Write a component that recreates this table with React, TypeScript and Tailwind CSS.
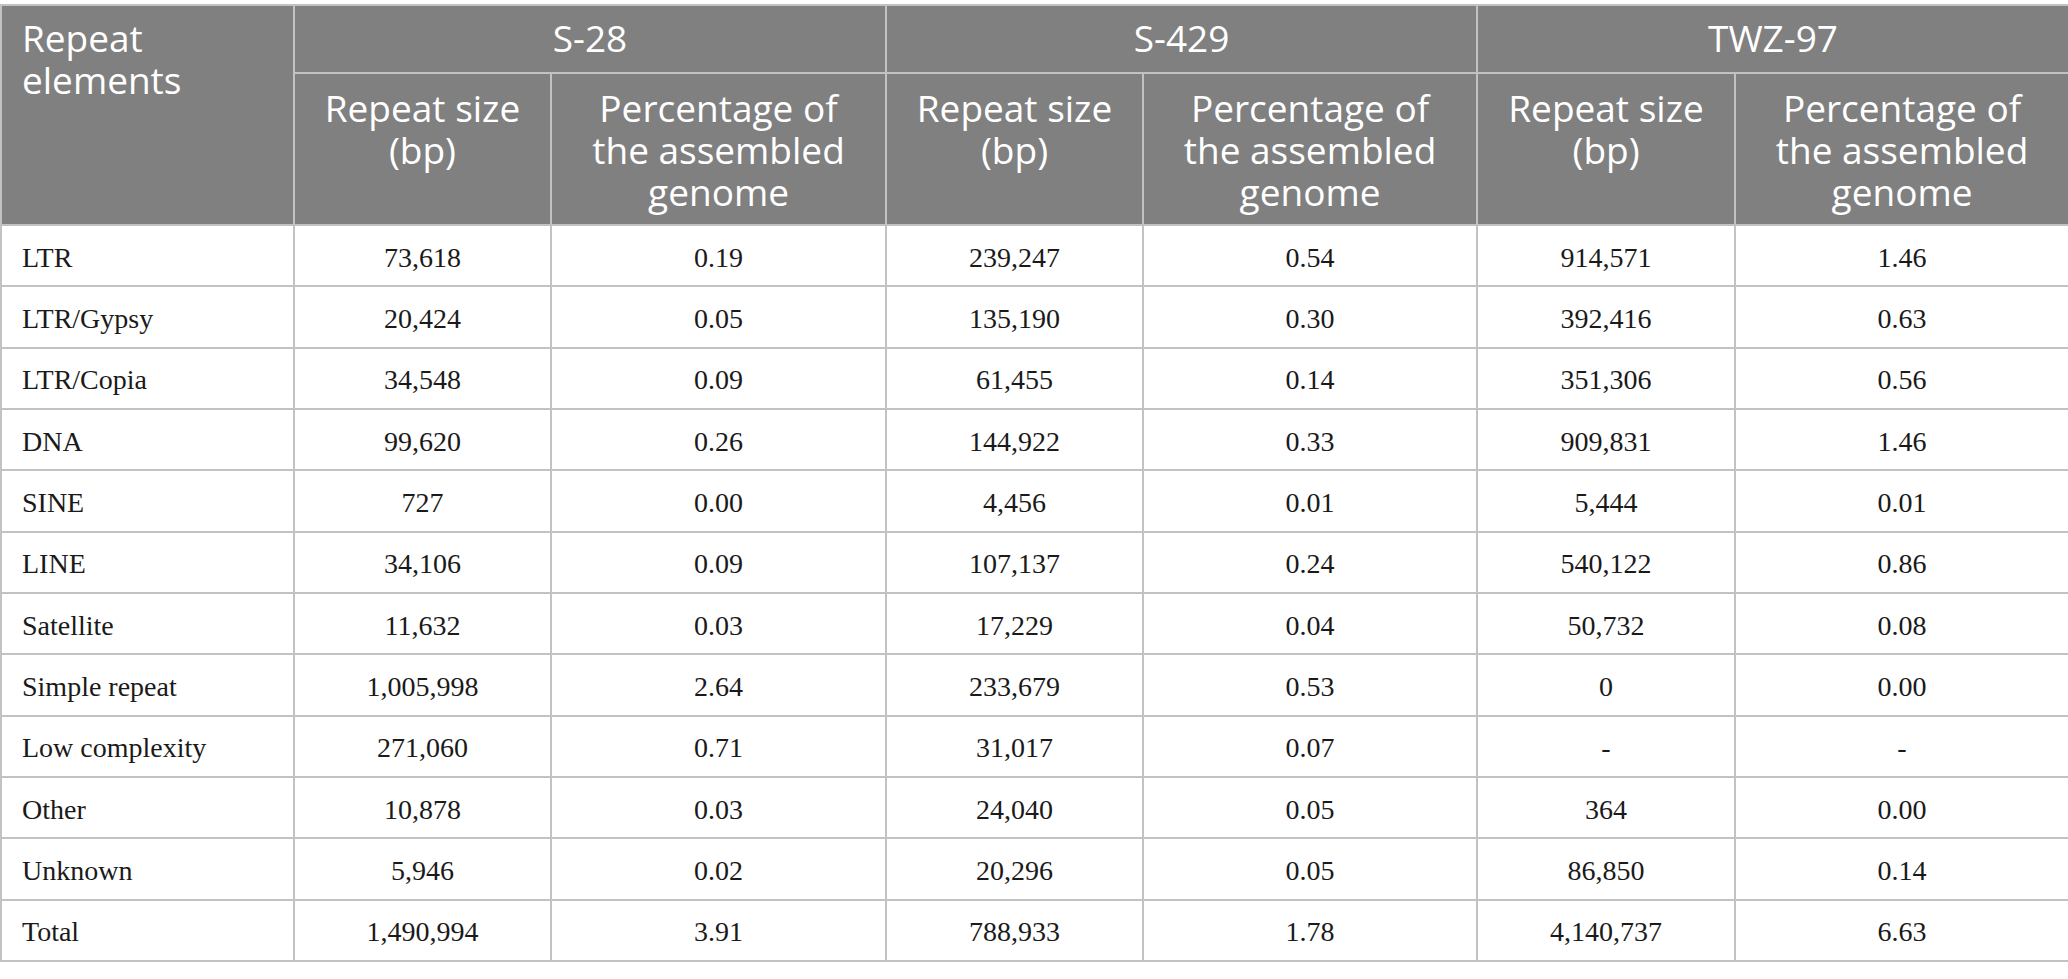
import React from "react";

const rows: string[][] = [
  ["LTR", "73,618", "0.19", "239,247", "0.54", "914,571", "1.46"],
  ["LTR/Gypsy", "20,424", "0.05", "135,190", "0.30", "392,416", "0.63"],
  ["LTR/Copia", "34,548", "0.09", "61,455", "0.14", "351,306", "0.56"],
  ["DNA", "99,620", "0.26", "144,922", "0.33", "909,831", "1.46"],
  ["SINE", "727", "0.00", "4,456", "0.01", "5,444", "0.01"],
  ["LINE", "34,106", "0.09", "107,137", "0.24", "540,122", "0.86"],
  ["Satellite", "11,632", "0.03", "17,229", "0.04", "50,732", "0.08"],
  ["Simple repeat", "1,005,998", "2.64", "233,679", "0.53", "0", "0.00"],
  ["Low complexity", "271,060", "0.71", "31,017", "0.07", "-", "-"],
  ["Other", "10,878", "0.03", "24,040", "0.05", "364", "0.00"],
  ["Unknown", "5,946", "0.02", "20,296", "0.05", "86,850", "0.14"],
  ["Total", "1,490,994", "3.91", "788,933", "1.78", "4,140,737", "6.63"],
];

const sans = "font-['Open_Sans','Noto_Sans',sans-serif]";

function SubHeaders() {
  return (
    <>
      <th className="border-2 border-[#c2c2c2] align-top pt-[13px] font-normal text-center">
        Repeat size
        <br />
        (bp)
      </th>
      <th className="border-2 border-[#c2c2c2] align-top pt-[13px] font-normal text-center">
        Percentage of
        <br />
        the assembled
        <br />
        genome
      </th>
    </>
  );
}

export default function App() {
  return (
    <div className="w-[2068px] h-[979px] bg-white pt-[4px] overflow-hidden">
      <table className="w-[2068px] table-fixed border-collapse">
        <colgroup>
          <col className="w-[293px]" />
          <col className="w-[257px]" />
          <col className="w-[335px]" />
          <col className="w-[257px]" />
          <col className="w-[334px]" />
          <col className="w-[258px]" />
          <col className="w-[334px]" />
        </colgroup>
        <thead className={`${sans} bg-[#7f807f] text-white text-[37px] leading-[42px]`}>
          <tr className="h-[68px]">
            <th
              rowSpan={2}
              className="border-2 border-[#c2c2c2] align-top text-left font-normal pl-[20px] pt-[11px]"
            >
              Repeat
              <br />
              elements
            </th>
            <th colSpan={2} className="border-2 border-[#c2c2c2] font-normal text-center pb-[3px]">
              S-28
            </th>
            <th colSpan={2} className="border-2 border-[#c2c2c2] font-normal text-center pb-[3px]">
              S-429
            </th>
            <th colSpan={2} className="border-2 border-[#c2c2c2] font-normal text-center pb-[3px]">
              TWZ-97
            </th>
          </tr>
          <tr className="h-[152px]">
            <SubHeaders />
            <SubHeaders />
            <SubHeaders />
          </tr>
        </thead>
        <tbody className="font-['Liberation_Serif','Times_New_Roman',serif] text-[28px] text-[#1a1a1a]">
          {rows.map((r, i) => (
            <tr key={i} className="h-[61.33px]">
              {r.map((c, j) => (
                <td
                  key={j}
                  className={`border-2 border-[#c2c2c2] align-middle pt-[4px] ${
                    j === 0 ? "text-left pl-[20px]" : "text-center"
                  }`}
                >
                  {c}
                </td>
              ))}
            </tr>
          ))}
        </tbody>
      </table>
    </div>
  );
}
